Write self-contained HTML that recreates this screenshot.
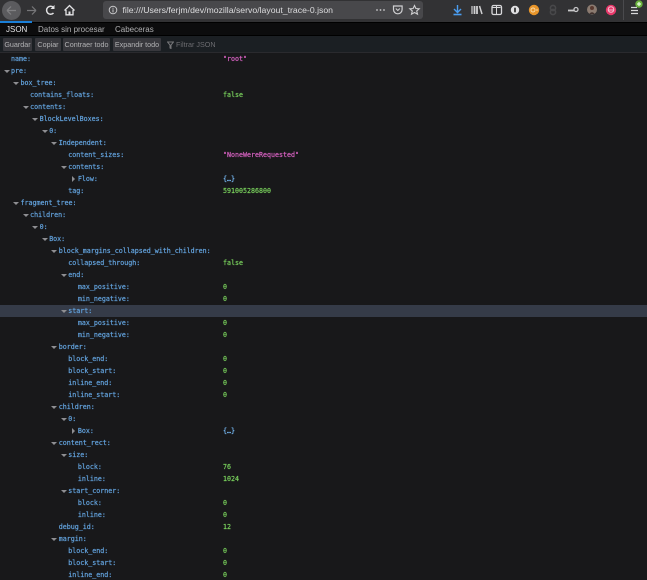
<!DOCTYPE html>
<html><head><meta charset="utf-8"><style>
html,body{margin:0;padding:0;background:#18181a;width:647px;height:580px;overflow:hidden}
*{box-sizing:border-box}
.abs,.k,.v,.tw,.hl,.b{position:absolute}
#top{position:absolute;left:0;top:0;width:647px;height:22px;background:#323234}
#tabs{position:absolute;left:0;top:22px;width:647px;height:14px;background:#0c0c0d;border-bottom:1px solid #000;border-top:1px solid #000}
#tb{position:absolute;left:0;top:36px;width:647px;height:17px;background:#1b1f23;border-bottom:1px solid #2a2a2e}
#url{position:absolute;left:103px;top:1px;width:320px;height:18px;background:#48484b;border-radius:3px}
.t{position:absolute;font:8px/12px "Liberation Sans",sans-serif;top:24px;color:#b1b1b3}
.b{top:38px;height:13px;background:#38383d;color:#b1b1b3;font:7.2px/13px "Liberation Sans",sans-serif;text-align:center;border-radius:1px}
.k,.v{font:6.65px/12px "DejaVu Sans Mono",monospace;white-space:pre;-webkit-text-stroke:.2px currentColor}
.k{color:#63a3de}
.s{color:#d862c2}.n{color:#78cf5c}.o{color:#78bcf8}
.tw{width:0;height:0;border-left:3px solid transparent;border-right:3px solid transparent;border-top:3px solid #8e8e92}
.tr{width:0;height:0;border-top:3px solid transparent;border-bottom:3px solid transparent;border-left:3px solid #8e8e92}
.hl{left:0;width:647px;height:12px;background:#353b48;top:305px}
#rows{filter:blur(.2px)}
</style></head><body>
<div id="top">
<div class="abs" style="left:2px;top:1px;width:19px;height:19px;border-radius:50%;background:#5b5b5e"></div>
<svg class="abs" style="left:0;top:0" width="100" height="22" fill="none">
<path d="M7 10.5h9M7 10.5l4-4M7 10.5l4 4" stroke="#808083" stroke-width="1.2"/>
<path d="M27 10.5h9M36 10.5l-4-4M36 10.5l-4 4" stroke="#77777a" stroke-width="1.2"/>
<path d="M53.5 7.5A4 4 0 1 0 53.5 13" stroke="#e4e4e6" stroke-width="1.5"/><path d="M54.5 5v4h-4z" fill="#e4e4e6"/>
<path d="M64.5 10.5L69.5 5.5L74.5 10.5M66 10v4.8h7V10" stroke="#e4e4e6" stroke-width="1.3"/><rect x="68.5" y="11.5" width="2" height="3.3" fill="#e4e4e6"/>
</svg>
<div id="url"></div>
<svg class="abs" style="left:108px;top:5px" width="10" height="10" fill="none"><circle cx="5" cy="5" r="3.8" stroke="#c8c8ca"/><path d="M5 4.4v3M5 2.8v.9" stroke="#c8c8ca"/></svg>
<div class="abs" style="left:122.5px;top:4px;font:8.7px/13px 'Liberation Sans',sans-serif;color:#dcdcde;white-space:pre">file:///Users/ferjm/dev/mozilla/servo/layout_trace-0.json</div>
<svg class="abs" style="left:370px;top:0" width="270" height="22" fill="none">
<circle cx="7" cy="10" r=".9" fill="#c8c8ca"/><circle cx="10.5" cy="10" r=".9" fill="#c8c8ca"/><circle cx="14" cy="10" r=".9" fill="#c8c8ca"/>
<path d="M23.5 6h8.6v3.5a4.3 4.3 0 0 1-8.6 0z" stroke="#d0d0d2" stroke-width="1.2"/><path d="M25.8 8.5l2 2 2-2" stroke="#d0d0d2"/>
<path d="M44.5 5.5l1.4 3 3.3.3-2.5 2.2.8 3.2-3-1.7-3 1.7.8-3.2-2.5-2.2 3.3-.3z" stroke="#d0d0d2" stroke-width="1.1"/>
<path d="M87.5 5v7M84 9l3.5 3.5L91 9" stroke="#4a9df0" stroke-width="1.4"/><path d="M83.5 14.5h8" stroke="#4a9df0" stroke-width="1.6"/>
<g transform="translate(-7.5 0)">
<path d="M112 6v8M114.5 6v8" stroke="#d0d0d2" stroke-width="1.8"/><path d="M109.5 6v8" stroke="#d0d0d2" stroke-width="1.2"/><path d="M117 6l2.5 8" stroke="#d0d0d2" stroke-width="1.5"/>
</g>
<g transform="translate(-10 0)">
<rect x="132" y="5.5" width="9.5" height="9" rx="1.5" stroke="#d8d8da" stroke-width="1.3"/><path d="M136.5 6v8M132.5 7.5h8" stroke="#d8d8da"/>
<circle cx="155" cy="10" r="4.2" fill="#e0e0e2"/><rect x="154" y="7.5" width="2" height="5" rx="1" fill="#444"/>
<circle cx="174" cy="10" r="5.2" fill="#e8952a"/><circle cx="173" cy="10" r="2" stroke="#f8d9a8"/><path d="M176 10h2" stroke="#f8d9a8"/>
<circle cx="193" cy="8" r="2.6" stroke="#48484a" stroke-width="1.6"/><circle cx="193" cy="12" r="2.6" stroke="#48484a" stroke-width="1.6"/>
<path d="M208 10.5h6" stroke="#c8c8ca" stroke-width="1.8"/><circle cx="216" cy="9.5" r="2" stroke="#c8c8ca" stroke-width="1.3"/>
<circle cx="232" cy="9.5" r="5" fill="#8a7a70"/><circle cx="232" cy="8" r="2" fill="#5a3a30"/><path d="M229.5 14a3 4 0 0 1 5 0z" fill="#40302c"/>
<circle cx="251" cy="10" r="5.2" fill="#e8386a"/><circle cx="251" cy="9.5" r="2.8" stroke="#f5c0d0"/><path d="M248.5 10h5" stroke="#f5c0d0"/>
</g>
</svg>
<div class="abs" style="left:622.5px;top:0;width:1px;height:20px;background:#4a4a4d"></div>
<svg class="abs" style="left:628px;top:0" width="19" height="18" fill="none">
<path d="M3 7.5h6M3 10.5h7M3 13.5h7" stroke="#d8d8da" stroke-width="1.3"/>
<circle cx="11" cy="4" r="3.7" fill="#6cb33e"/><path d="M11 2v4M9 4h4" stroke="#e8ffe0" stroke-width="1.2"/></svg>
</div>
<div id="tabs"></div>
<div class="abs" style="left:0;top:21px;width:32px;height:2px;background:#1a7fd8"></div>
<div class="t" style="left:6px;color:#e4e4e6">JSON</div>
<div class="t" style="left:38px">Datos sin procesar</div>
<div class="t" style="left:115px">Cabeceras</div>
<div id="tb"></div>
<div class="b" style="left:3px;width:29px">Guardar</div>
<div class="b" style="left:35px;width:26px">Copiar</div>
<div class="b" style="left:63px;width:47px">Contraer todo</div>
<div class="b" style="left:113px;width:48px">Expandir todo</div>
<svg class="abs" style="left:167px;top:41px" width="7" height="8"><path d="M.5 1h6L4 4v3.5L3 7V4z" fill="none" stroke="#77777a"/></svg>
<div class="abs" style="left:176px;top:38px;font:7.2px/13px 'Liberation Sans',sans-serif;color:#6c6c70">Filtrar JSON</div>
<div class="hl"></div>
<div id="rows"></div>
<script>
var R=[["name",0,0,'"root"','s'],["pre",0,1],["box_tree",1,1],["contains_floats",2,0,"false",'n'],["contents",2,1],["BlockLevelBoxes",3,1],["0",4,1],["Independent",5,1],["content_sizes",6,0,'"NoneWereRequested"','s'],["contents",6,1],["Flow",7,2,"{…}",'o'],["tag",6,0,"591005286800",'n'],["fragment_tree",1,1],["children",2,1],["0",3,1],["Box",4,1],["block_margins_collapsed_with_children",5,1],["collapsed_through",6,0,"false",'n'],["end",6,1],["max_positive",7,0,"0",'n'],["min_negative",7,0,"0",'n'],["start",6,1],["max_positive",7,0,"0",'n'],["min_negative",7,0,"0",'n'],["border",5,1],["block_end",6,0,"0",'n'],["block_start",6,0,"0",'n'],["inline_end",6,0,"0",'n'],["inline_start",6,0,"0",'n'],["children",5,1],["0",6,1],["Box",7,2,"{…}",'o'],["content_rect",5,1],["size",6,1],["block",7,0,"76",'n'],["inline",7,0,"1024",'n'],["start_corner",6,1],["block",7,0,"0",'n'],["inline",7,0,"0",'n'],["debug_id",5,0,"12",'n'],["margin",5,1],["block_end",6,0,"0",'n'],["block_start",6,0,"0",'n'],["inline_end",6,0,"0",'n']];
var h="";
R.forEach(function(r,i){var y=53+12*i,x=11+9.55*r[1];
h+='<div class="k" style="left:'+x+'px;top:'+y+'px">'+r[0]+':</div>';
if(r[2]==1)h+='<div class="tw" style="left:'+(x-7.5)+'px;top:'+(y+4.5)+'px"></div>';
if(r[2]==2)h+='<div class="abs tr" style="left:'+(x-6)+'px;top:'+(y+3)+'px"></div>';
if(r[3])h+='<div class="v '+r[4]+'" style="left:223px;top:'+y+'px">'+r[3]+'</div>';});
document.getElementById("rows").innerHTML=h;
</script>
</body></html>
